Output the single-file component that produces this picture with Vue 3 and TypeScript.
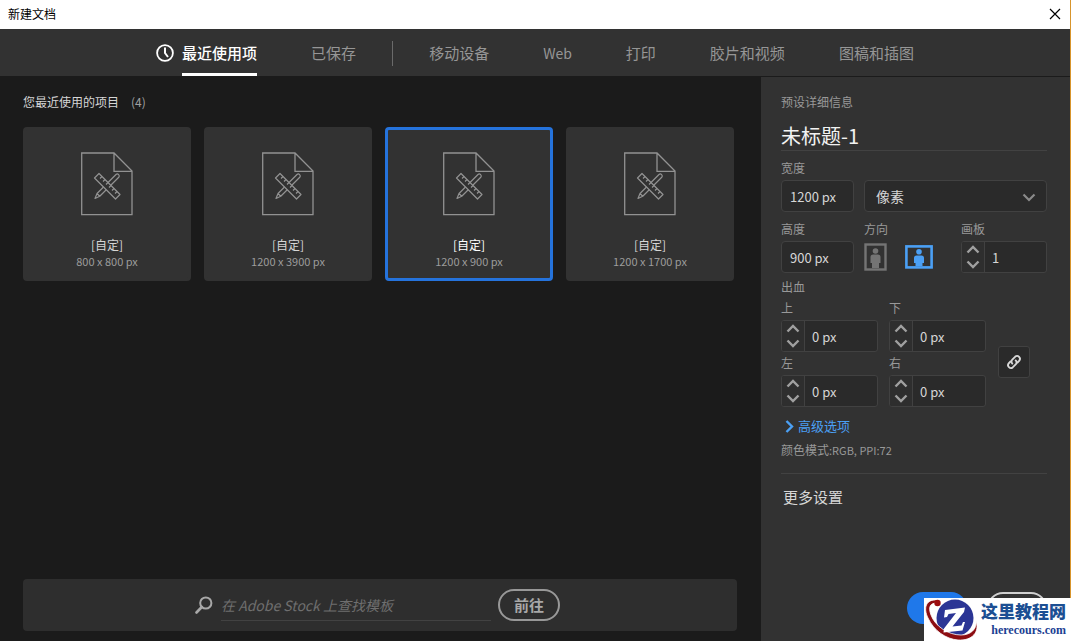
<script setup lang="ts">
import { ref } from 'vue'

interface Preset {
  id: number
  name: string
  size: string
}

const mainTabs = ['移动设备', 'Web', '打印', '胶片和视频', '图稿和插图']
const activeTab = ref('最近使用项')

const presets: Preset[] = [
  { id: 1, name: '[自定]', size: '800 x 800 px' },
  { id: 2, name: '[自定]', size: '1200 x 3900 px' },
  { id: 3, name: '[自定]', size: '1200 x 900 px' },
  { id: 4, name: '[自定]', size: '1200 x 1700 px' },
]
const selected = ref(3)

const title = ref('未标题-1')
const docWidth = ref('1200 px')
const docHeight = ref('900 px')
const unit = ref('像素')
const orientation = ref('landscape')
const artboards = ref(1)
const linked = ref(true)
const query = ref('')

const bleeds = ref([
  { id: 'top', label: '上', value: 0 },
  { id: 'bottom', label: '下', value: 0 },
  { id: 'left', label: '左', value: 0 },
  { id: 'right', label: '右', value: 0 },
])

function stepBleed(index: number, delta: number) {
  const next = Math.max(0, bleeds.value[index].value + delta)
  bleeds.value.forEach((b, i) => {
    if (linked.value || i === index) b.value = next
  })
}
</script>

<template>
  <div class="window">
    <header class="titlebar">
      <span>新建文档</span>
      <button class="close" aria-label="Close">
        <svg width="12" height="12" viewBox="0 0 12 12"><path d="M1 1 11 11M11 1 1 11" stroke="#000" stroke-width="1.2" /></svg>
      </button>
    </header>

    <nav class="tabs">
      <button class="tab recent" :class="{ active: activeTab === '最近使用项' }" @click="activeTab = '最近使用项'">
        <svg width="18" height="18" viewBox="0 0 18 18" fill="none" stroke="currentColor">
          <circle cx="9" cy="9" r="7.9" stroke-width="1.8" />
          <path d="M9 3.5V9l3 4" stroke-width="2" />
        </svg>
        <span class="tab-text">最近使用项</span>
      </button>
      <button class="tab" :class="{ active: activeTab === '已保存' }" @click="activeTab = '已保存'">
        <span class="tab-text">已保存</span>
      </button>
      <span class="divider"></span>
      <button
        v-for="t in mainTabs"
        :key="t"
        class="tab"
        :class="{ active: activeTab === t, latin: t === 'Web' }"
        @click="activeTab = t"
      >
        <span class="tab-text">{{ t }}</span>
      </button>
    </nav>

    <div class="body">
      <main class="content">
        <h2 class="section-title">您最近使用的项目<span class="count">(4)</span></h2>
        <div class="cards">
          <button
            v-for="p in presets"
            :key="p.id"
            class="card"
            :class="{ selected: selected === p.id }"
            :aria-pressed="selected === p.id"
            @click="selected = p.id"
          >
            <svg class="doc" width="52" height="64" viewBox="0 0 52 64" fill="none" stroke="#929292" stroke-width="1.3">
              <path d="M.7 1H33L51 19V62.6H.7ZM33 1V19.4H51" />
              <g stroke-width="1.2" stroke-linejoin="round">
                <path d="M18 21.500 39 42.500 34.500 47 13.500 26Z" />
                <path d="M21 24.500l-2 2M24 27.500l-2 2M27 30.500l-2 2M30 33.500l-2 2M33 36.500l-2 2M36 39.500l-2 2" />
                <path d="M27 30.500 35 22.500a1.950 1.950 0 0 1 2.750 2.750L29.750 33.250" />
                <path d="M22.500 35 16 41.500 14 46.500 18.750 44.250 25.250 37.750M16 41.500 18.750 44.250" />
              </g>
            </svg>
            <span class="card-name">{{ p.name }}</span>
            <span class="card-size">{{ p.size }}</span>
          </button>
        </div>

        <form class="stock" @submit.prevent>
          <svg width="18" height="18" viewBox="0 0 18 18" fill="none" stroke="#a8a8a8">
            <circle cx="10.800" cy="7" r="5.600" stroke-width="2" />
            <path d="M6.800 11 1.500 16.500" stroke-width="2.600" stroke-linecap="round" />
          </svg>
          <input v-model="query" type="text" aria-label="在 Adobe Stock 上查找模板" placeholder="在 Adobe Stock 上查找模板" />
          <button class="go" type="submit">前往</button>
        </form>
      </main>

      <aside class="details">
        <label class="label" for="title">预设详细信息</label>
        <input id="title" v-model="title" class="title" type="text" />

        <div class="row size-row">
          <div class="narrow">
            <label class="label" for="w">宽度</label>
            <input id="w" v-model="docWidth" class="box" type="text" />
          </div>
          <div class="unit">
            <select v-model="unit" class="box" aria-label="单位">
              <option>像素</option>
              <option>毫米</option>
            </select>
            <svg class="caret" width="14" height="9" viewBox="0 0 14 9" fill="none"><path d="M1.500 1.500 7 7l5.500-5.500" stroke="#8a8a8a" stroke-width="2.200" /></svg>
          </div>
        </div>

        <div class="row height-row">
          <div class="narrow">
            <label class="label" for="h">高度</label>
            <input id="h" v-model="docHeight" class="box" type="text" />
          </div>
          <fieldset class="orient">
            <legend class="label">方向</legend>
            <div class="orient-options">
              <label>
                <input v-model="orientation" type="radio" name="orient" value="portrait" aria-label="纵向" />
                <svg width="24" height="28" viewBox="0 0 24 28">
                  <rect x="1.500" y="1.500" width="20" height="25" fill="none" stroke="currentColor" stroke-width="2.400" />
                  <circle cx="11.500" cy="8" r="2.800" fill="currentColor" />
                  <path d="M6.500 14q0-2.500 2.500-2.500h5q2.500 0 2.500 2.500v6H15v5H8v-5H6.500Z" fill="currentColor" />
                </svg>
              </label>
              <label>
                <input v-model="orientation" type="radio" name="orient" value="landscape" aria-label="横向" />
                <svg width="28" height="24" viewBox="0 0 28 24">
                  <rect x="1.400" y="1.400" width="25.200" height="21" fill="none" stroke="currentColor" stroke-width="2.600" />
                  <circle cx="14" cy="6.800" r="2.800" fill="currentColor" />
                  <path d="M9 13q0-2.500 2.500-2.500h5q2.500 0 2.500 2.500v5h-1.500v3h-7v-3H9Z" fill="currentColor" />
                </svg>
              </label>
            </div>
          </fieldset>
          <div class="artboard">
            <label class="label" for="ab">画板</label>
            <div class="stepper">
              <div class="arrows">
                <button aria-label="画板 +" @click="artboards++">
                  <svg width="14" height="9" viewBox="0 0 14 9"><path d="M1.500 7.500 7 2l5.500 5.500" /></svg>
                </button>
                <button aria-label="画板 -" @click="artboards = Math.max(1, artboards - 1)">
                  <svg width="14" height="9" viewBox="0 0 14 9"><path d="M1.500 1.500 7 7l5.500-5.500" /></svg>
                </button>
              </div>
              <input id="ab" type="text" :value="artboards" />
            </div>
          </div>
        </div>

        <div class="label bleed-title">出血</div>
        <div class="bleed">
          <div class="bleed-grid">
            <div v-for="(b, i) in bleeds" :key="b.id">
              <label class="label" :for="b.id">{{ b.label }}</label>
              <div class="stepper">
                <div class="arrows">
                  <button :aria-label="b.label + ' +'" @click="stepBleed(i, 1)">
                    <svg width="14" height="9" viewBox="0 0 14 9"><path d="M1.500 7.500 7 2l5.500 5.500" /></svg>
                  </button>
                  <button :aria-label="b.label + ' -'" @click="stepBleed(i, -1)">
                    <svg width="14" height="9" viewBox="0 0 14 9"><path d="M1.500 1.500 7 7l5.500-5.500" /></svg>
                  </button>
                </div>
                <input :id="b.id" type="text" :value="b.value + ' px'" />
              </div>
            </div>
          </div>
          <button class="link" aria-label="Link" :aria-pressed="linked" @click="linked = !linked">
            <svg width="16" height="16" viewBox="0 0 16 16" fill="none" stroke="#d8d8d8" stroke-width="1.900" stroke-linecap="round">
              <path d="M6.300 9.600a2.800 2.800 0 0 1 0-4l3-3a2.850 2.850 0 0 1 4 4L11.500 8.500" />
              <path d="M9.700 6.400a2.800 2.800 0 0 1 0 4l-3 3a2.850 2.850 0 0 1-4-4L4.500 7.500" />
            </svg>
          </button>
        </div>

        <button class="advanced">
          <svg width="9" height="14" viewBox="0 0 9 14" fill="none"><path d="M1.500 2 7 7.500l-5.500 5.500" stroke="#4ba0f5" stroke-width="2.400" /></svg>
          高级选项
        </button>
        <p class="mode">颜色模式<span class="mode-value">:RGB, PPI:72</span></p>
        <hr />
        <button class="more">更多设置</button>

        <footer class="actions">
          <button class="create" aria-label="创建"></button>
          <button class="cancel" aria-label="关闭"></button>
        </footer>
      </aside>
    </div>

    <div class="watermark">
      <svg width="57" height="43" viewBox="0 0 57 43">
        <circle cx="31" cy="20" r="18.500" fill="#2b3595" />
        <path d="M13 2C2 1-1 10 4 20c6 13 18 21 30 22 14 1 22-8 18-19 1 8-5 14-15 14C24 37 11 28 7 17 4 9 6 5 13 5Z" fill="#8c0d12" stroke="#fff" stroke-width=".8" />
        <circle cx="13.500" cy="5" r="3.200" fill="#9c0d10" />
        <path d="M21 12 41 9.500 40 14 28.500 28.500 37.500 27.500 39 24 41 24 38.500 32.500 19.500 34.500 20 30.500 32 15 24.500 16 23 19 20 19.500Z" fill="#fff" />
      </svg>
      <div class="mark-text">
        <span class="mark-name">这里教程网</span>
        <span class="mark-url">herecours.com</span>
      </div>
    </div>
  </div>
</template>

<style>
body {
  margin: 0;
  background: #1b1b1b;
}
</style>

<style scoped>
* {
  box-sizing: border-box;
}
.window {
  position: relative;
  display: flex;
  flex-direction: column;
  min-height: 100vh;
  border-right: 1px solid #d8952c;
  background: #1b1b1b;
  color: #d6d6d6;
  font-family: "Noto Sans CJK SC", "Noto Sans", sans-serif;
  font-size: 12px;
}
button,
input,
select {
  font-family: inherit;
  color: inherit;
}
button {
  margin: 0;
  padding: 0;
  border: 0;
  background: none;
  cursor: pointer;
}
svg {
  display: block;
  flex: none;
}
.titlebar {
  display: flex;
  align-items: center;
  justify-content: space-between;
  height: 29px;
  padding: 0 9px 2px 8px;
  background: #fff;
  color: #000;
}
.tabs {
  display: flex;
  align-items: stretch;
  justify-content: center;
  gap: 54px;
  height: 47px;
  background: #323232;
}
.tab {
  display: flex;
  align-items: center;
  gap: 8px;
  color: #969696;
  font-size: 15px;
  white-space: nowrap;
}
.tab.latin {
  font-size: 14px;
}
.tab-text {
  display: flex;
  align-items: center;
  height: 100%;
  border-top: 3px solid transparent;
  border-bottom: 3px solid transparent;
}
.tab.active {
  color: #fff;
  font-weight: 500;
}
.tab.active .tab-text {
  border-bottom-color: #fff;
}
.divider {
  width: 1px;
  margin: 12px -18px 10px;
  background: #6a6a6a;
}
.body {
  display: flex;
  flex: 1;
}
.content {
  display: flex;
  flex: 1;
  flex-direction: column;
  padding: 16px 24px 10px 23px;
}
.section-title {
  margin: 0 0 15px;
  font-size: 12px;
  font-weight: 400;
  line-height: 20px;
}
.count {
  margin-left: 12px;
  color: #a0a0a0;
}
.cards {
  display: grid;
  grid-template-columns: repeat(auto-fill, minmax(165px, 1fr));
  gap: 13px;
  padding-right: 3px;
}
.card {
  display: flex;
  flex-direction: column;
  align-items: center;
  height: 154px;
  padding: 22px 0 0;
  border: 3px solid #323232;
  border-radius: 4px;
  background: #323232;
}
.card.selected {
  border-color: #2573dc;
}
.card.selected .card-name {
  color: #fff;
}
.card-name {
  margin-top: 20px;
  font-size: 12px;
  line-height: 18px;
}
.card-size {
  color: #9c9c9c;
  font-size: 11px;
  line-height: 15px;
}
.stock {
  display: flex;
  align-items: center;
  justify-content: center;
  height: 52px;
  margin-top: auto;
  padding-right: 5px;
  border-radius: 4px;
  background: #2e2e2e;
}
.stock input {
  width: 270px;
  height: 32px;
  margin: 0 7px 0 8px;
  padding: 0;
  border: 0;
  border-bottom: 1px solid #424242;
  outline: 0;
  background: none;
  font-size: 14px;
  font-style: italic;
}
.stock input::placeholder {
  color: #6f6f6f;
  opacity: 1;
}
.go {
  width: 62px;
  height: 32px;
  border: 2px solid #989898;
  border-radius: 16px;
  color: #a8a8a8;
  font-size: 15px;
  font-weight: 700;
  line-height: 26px;
}
.details {
  display: flex;
  flex-direction: column;
  align-items: stretch;
  width: 309px;
  padding: 17px 23px 17px 20px;
  border-top: 1px solid #1b1b1b;
  background: #323232;
}
.label {
  display: block;
  padding: 0;
  color: #999;
  font-size: 12px;
  line-height: 16px;
}
.title {
  width: 100%;
  height: 31px;
  margin-top: 10px;
  padding: 0;
  border: 0;
  border-bottom: 1px solid #424242;
  outline: 0;
  background: none;
  color: #f2f2f2;
  font-size: 20px;
}
.row {
  display: flex;
}
.size-row {
  align-items: flex-end;
  gap: 10px;
  margin-top: 9px;
}
.height-row {
  gap: 10px;
  margin-top: 9px;
}
.narrow {
  width: 73px;
}
.box {
  display: block;
  width: 100%;
  height: 32px;
  margin-top: 4px;
  padding: 0 8px;
  border: 1px solid #414141;
  border-radius: 4px;
  outline: 0;
  background: #2a2a2a;
  font-size: 13px;
}
.unit {
  position: relative;
  flex: 1;
}
.unit .box {
  padding: 0 11px;
  appearance: none;
  font-size: 14px;
}
.caret {
  position: absolute;
  right: 11px;
  bottom: 10px;
  pointer-events: none;
}
.orient {
  flex: 1;
  min-width: 0;
  margin: 0;
  padding: 0;
  border: 0;
}
.orient-options {
  display: flex;
  align-items: center;
  gap: 17px;
  height: 32px;
  margin-top: 4px;
}
.orient-options label {
  color: #747474;
}
.orient-options label:has(input:checked) {
  color: #4ba0f5;
}
.orient-options input {
  position: absolute;
  margin: 0;
  opacity: 0;
}
.artboard {
  width: 86px;
}
.stepper {
  display: flex;
  height: 32px;
  margin-top: 4px;
  overflow: hidden;
  border: 1px solid #414141;
  border-radius: 3px;
  background: #2a2a2a;
}
.arrows {
  display: flex;
  flex-direction: column;
  justify-content: center;
  gap: 6px;
  width: 23px;
  padding-left: 4px;
  border-right: 1px solid #414141;
  background: #2e2e2e;
}
.arrows path {
  fill: none;
  stroke: #a0a0a0;
  stroke-width: 2.4;
}
.stepper input {
  flex: 1;
  min-width: 0;
  padding: 0 7px;
  border: 0;
  outline: 0;
  background: none;
  font-size: 13px;
}
.bleed-title {
  margin-top: 6px;
}
.bleed {
  display: flex;
  align-items: center;
  gap: 12px;
  margin-top: 5px;
}
.bleed-grid {
  display: grid;
  grid-template-columns: 97px 97px;
  gap: 3px 11px;
}
.link {
  display: flex;
  align-items: center;
  justify-content: center;
  width: 32px;
  height: 32px;
  margin-top: 16px;
  border: 1px solid #414141;
  border-radius: 3px;
  background: #2a2a2a;
}
.advanced {
  display: flex;
  align-items: center;
  align-self: flex-start;
  gap: 4px;
  margin-top: 10px;
  padding-left: 4px;
  color: #4ba0f5;
  font-size: 13px;
  line-height: 18px;
}
.mode {
  margin: 7px 0 15px;
  color: #999;
  font-size: 12px;
  line-height: 16px;
}
.mode-value {
  font-size: 11px;
}
hr {
  width: 100%;
  margin: 0;
  border: 0;
  border-top: 1px solid #424242;
}
.more {
  align-self: flex-start;
  margin-top: 12px;
  padding-left: 2px;
  font-size: 15px;
  line-height: 22px;
}
.actions {
  display: flex;
  justify-content: flex-end;
  gap: 20px;
  margin-top: auto;
  padding-top: 16px;
}
.actions button {
  width: 60px;
  height: 32px;
  border-radius: 16px;
}
.create {
  background: #1f78ea;
}
.actions .cancel {
  border: 2px solid #d0d0d0;
}
.watermark {
  position: absolute;
  right: -1px;
  bottom: 0;
  display: flex;
  width: 147px;
  height: 43px;
  background: #fff;
}
.mark-text {
  display: flex;
  flex-direction: column;
  align-items: flex-end;
  white-space: nowrap;
}
.mark-name {
  color: #1c4f93;
  font-size: 17px;
  font-weight: 900;
  line-height: 26px;
}
.mark-url {
  color: #1c3f93;
  font-family: "Liberation Serif", serif;
  font-size: 12px;
  font-weight: 700;
  line-height: 12px;
}
</style>
